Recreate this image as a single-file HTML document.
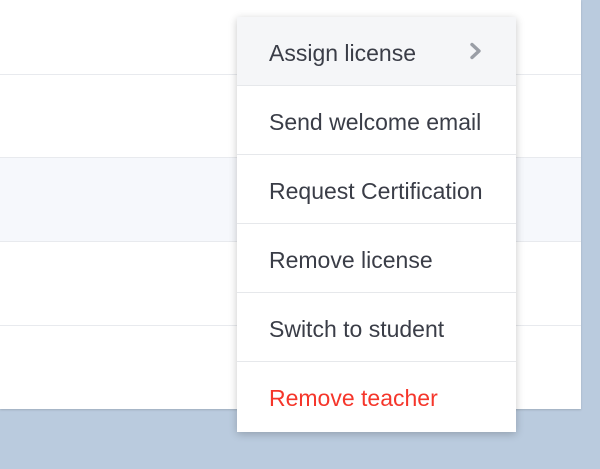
<!DOCTYPE html>
<html><head><style>
body{margin:0;width:600px;height:469px;background:#bacbde;position:relative;overflow:hidden;font-family:"Liberation Sans",sans-serif}
.panel{position:absolute;left:0;top:0;width:581px;height:409px;background:#fff;box-shadow:0 1px 2px rgba(0,0,0,.15)}
.line{position:absolute;left:0;width:581px;height:1px;background:#e8eaee}
.tint{position:absolute;left:0;top:158px;width:581px;height:83px;background:#f6f8fc}
.menu{position:absolute;left:237px;top:17px;width:279px;height:415px;background:#fff;box-shadow:0 2px 8px rgba(0,0,0,.22)}
.item{height:68px;border-bottom:1px solid #e6e8eb;box-sizing:content-box;position:relative;font-size:23px;color:#3a3d47;line-height:72px;padding-left:32px;white-space:nowrap}
.item:last-child{border-bottom:none}
.first{background:#f5f6f8}
.red{color:#f5362b}
</style></head><body>
<div class="panel"></div>
<div class="tint"></div>
<div class="line" style="top:74px"></div>
<div class="line" style="top:157px"></div>
<div class="line" style="top:241px"></div>
<div class="line" style="top:325px"></div>
<div class="menu">
<div class="item first">Assign license<svg style="position:absolute;left:232px;top:25px" width="14" height="18" viewBox="0 0 14 18"><path d="M3 2.5 L10 9 L3 15.5" fill="none" stroke="#9a9ea6" stroke-width="3.4" stroke-linecap="round" stroke-linejoin="round"/></svg></div>
<div class="item">Send welcome email</div>
<div class="item">Request Certification</div>
<div class="item">Remove license</div>
<div class="item">Switch to student</div>
<div class="item red">Remove teacher</div>
</div>
</body></html>
